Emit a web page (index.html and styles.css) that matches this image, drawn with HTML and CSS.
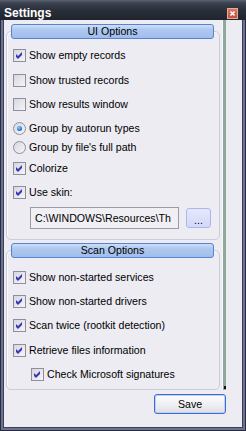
FILE: index.html
```html
<!DOCTYPE html>
<html lang="en">
<head>
  <meta charset="UTF-8" />
  <title>Settings</title>
  <link rel="stylesheet" href="styles.css">
</head>
<body>
  <div class="window">
    <div class="titlebar">
      <span class="title">Settings</span>
      <span class="close">
        <svg viewBox="0 0 11 11"><path d="M3 3 L8 8 M8 3 L3 8" /></svg>
      </span>
    </div>

    <div class="frame">
      <div class="client">
        <div class="main">
          <div class="panel">

            <!-- UI options -->
            <div class="group ui">
              <div class="group-title">UI Options</div>
              <div class="row"><span class="cb on"><svg viewBox="0 0 11 11"><polygon points="2,4 4,6 8,2 8,5 4,9 2,7" /></svg></span>Show empty records</div>
              <div class="row"><span class="cb"></span>Show trusted records</div>
              <div class="row"><span class="cb"></span>Show results window</div>
              <div class="row"><span class="rb on"></span>Group by autorun types</div>
              <div class="row"><span class="rb"></span>Group by file's full path</div>
              <div class="row"><span class="cb on"><svg viewBox="0 0 11 11"><polygon points="2,4 4,6 8,2 8,5 4,9 2,7" /></svg></span>Colorize</div>
              <div class="row"><span class="cb on"><svg viewBox="0 0 11 11"><polygon points="2,4 4,6 8,2 8,5 4,9 2,7" /></svg></span>Use skin:</div>
              <div class="skin-row">
                <div class="path"><span>C:\WINDOWS\Resources\Th</span></div>
                <button class="browse">...</button>
              </div>
            </div>

            <!-- Scan options -->
            <div class="group scan">
              <div class="group-title">Scan Options</div>
              <div class="row"><span class="cb on"><svg viewBox="0 0 11 11"><polygon points="2,4 4,6 8,2 8,5 4,9 2,7" /></svg></span>Show non-started services</div>
              <div class="row"><span class="cb on"><svg viewBox="0 0 11 11"><polygon points="2,4 4,6 8,2 8,5 4,9 2,7" /></svg></span>Show non-started drivers</div>
              <div class="row"><span class="cb on"><svg viewBox="0 0 11 11"><polygon points="2,4 4,6 8,2 8,5 4,9 2,7" /></svg></span>Scan twice (rootkit detection)</div>
              <div class="row"><span class="cb on"><svg viewBox="0 0 11 11"><polygon points="2,4 4,6 8,2 8,5 4,9 2,7" /></svg></span>Retrieve files information</div>
              <div class="row sub"><span class="cb on"><svg viewBox="0 0 11 11"><polygon points="2,4 4,6 8,2 8,5 4,9 2,7" /></svg></span>Check Microsoft signatures</div>
            </div>

          </div>
          <div class="splitter"><span class="tip"></span></div>
          <div class="gutter"></div>
        </div>

        <div class="footer">
          <button class="save">Save</button>
        </div>
      </div>
    </div>
  </div>
</body>
</html>
```

FILE: styles.css
```css
* { box-sizing: border-box; }

body {
  margin: 0;
  font-family: "Liberation Sans", Arial, sans-serif;
  font-size: 10.6px;
  color: #000;
  background: #1e222c;
}

.window {
  width: 246px;
  height: 431px;
  display: flex;
  flex-direction: column;
  background: #272c3d;
  padding: 0 1px 1px 1px;
}

.titlebar {
  height: 20px;
  margin: 0 -1px;
  display: flex;
  align-items: flex-start;
  background: linear-gradient(#5c6272 0, #3b414f 3px, #2a2f3b 10px, #20242e 100%);
}

.title {
  color: #fff;
  font-weight: bold;
  font-size: 12px;
  line-height: 14px;
  padding: 6px 0 0 4px;
}

.close {
  margin: 8px 8px 0 auto;
  width: 11px;
  height: 11px;
  background: linear-gradient(#d67a64, #c0533f);
  border: 1px solid #e8aa98;
  display: flex;
}

.close svg {
  width: 9px;
  height: 9px;
}

.close path {
  stroke: #fff;
  stroke-width: 1.8;
  fill: none;
}

.frame {
  flex: 1;
  display: flex;
  background: #6b7294;
  padding: 0 2px 2px 2px;
}

.client {
  flex: 1;
  display: flex;
  flex-direction: column;
  background: #ececf2;
  border: 1px solid #394058;
  border-top: none;
}

.main {
  height: 370px;
  display: flex;
}

.panel {
  width: 218px;
  padding: 11px 2px 0 2px;
}

.splitter {
  width: 4px;
  border-left: 1px solid #f8f8fa;
  background: #8fa89c;
  display: flex;
  flex-direction: column;
  justify-content: flex-end;
}

.tip {
  width: 2px;
  height: 3px;
  margin: 0 0 1px 1px;
  background: #111;
}

.gutter {
  flex: 1;
}

/* group boxes */
.group {
  border: 1px solid #cdcdd5;
  border-radius: 5px;
  box-shadow: inset 1px 1px 0 #fbfbfd;
}

.group.ui {
  padding-bottom: 10px;
}

.group.scan {
  margin-top: 10px;
  padding-bottom: 8px;
}

.group-title {
  height: 15px;
  margin: -8px 5px 0 4px;
  line-height: 13px;
  text-align: center;
  border: 1px solid #5683d2;
  border-radius: 3px;
  background: linear-gradient(#cddff9 0, #afc8f0 35%, #a0bdec 100%);
}

.row {
  height: 13px;
  line-height: 13px;
  display: flex;
  align-items: center;
  gap: 3px;
  margin-left: 6px;
  white-space: nowrap;
}

.ui .row:nth-child(2) { margin-top: 10px; }
.ui .row:nth-child(3) { margin-top: 12px; }
.ui .row:nth-child(4) { margin-top: 11px; }
.ui .row:nth-child(5) { margin-top: 11px; }
.ui .row:nth-child(6) { margin-top: 6px; }
.ui .row:nth-child(7) { margin-top: 8px; }
.ui .row:nth-child(8) { margin-top: 11px; }

.scan .row:nth-child(2) { margin-top: 13px; }
.scan .row:nth-child(3) { margin-top: 11px; }
.scan .row:nth-child(4) { margin-top: 11px; }
.scan .row:nth-child(5) { margin-top: 12px; }
.scan .row:nth-child(6) { margin-top: 11px; }

.row.sub {
  margin-left: 24px;
}

.cb, .rb {
  flex: none;
  width: 13px;
  height: 13px;
  border: 1px solid #8e8f9e;
  background: linear-gradient(135deg, #d6d6dd, #f6f6f8);
  display: flex;
  align-items: center;
  justify-content: center;
}

.cb svg {
  width: 11px;
  height: 11px;
}

.cb polygon {
  fill: #3838b6;
}

.rb {
  border-radius: 50%;
}

.rb.on::after {
  content: "";
  width: 5px;
  height: 5px;
  border-radius: 50%;
  background: radial-gradient(circle at 40% 35%, #8ad8ff 0, #2d78dc 55%, #1d4ea8 100%);
}

.skin-row {
  display: flex;
  align-items: center;
  margin: 8px 0 0 23px;
}

.path {
  width: 149px;
  height: 22px;
  line-height: 20px;
  border: 1px solid #9c9ca8;
  background: #efeff4;
  padding-left: 4px;
  overflow: hidden;
  white-space: nowrap;
}

.browse {
  width: 25px;
  height: 20px;
  margin-left: 7px;
  padding: 0;
  font: inherit;
  line-height: 14px;
  padding-top: 4px;
  border: 1px solid #a9b8e6;
  border-radius: 3px;
  background: linear-gradient(#e6e8fd, #d3d7fa);
}

.footer {
  display: flex;
  justify-content: flex-end;
  padding: 4px 16px 0 0;
}

.save {
  width: 72px;
  height: 20px;
  padding: 0;
  font: inherit;
  border: 1px solid #3d6dd2;
  border-radius: 3px;
  background: linear-gradient(#fdfdfe 0, #f0f0f4 50%, #dedee6 100%);
  box-shadow: inset 0 0 0 1px #bcd0f4;
}
```
